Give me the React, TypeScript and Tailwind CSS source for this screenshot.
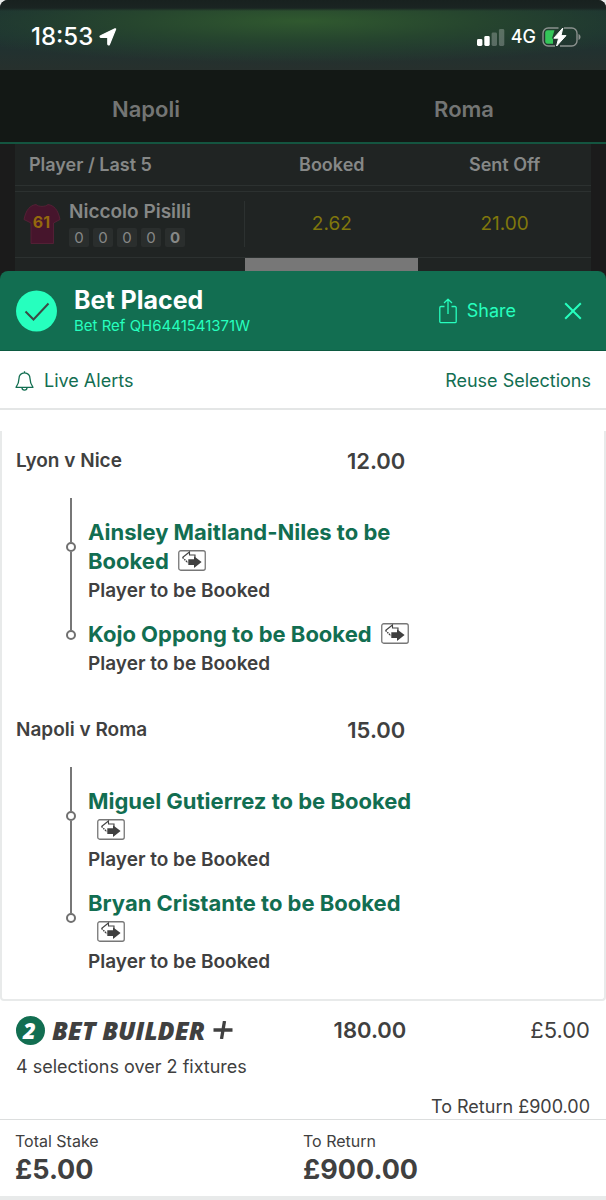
import type { ReactNode } from "react";

type Selection = { name: string; market: string };
type Fixture = { title: string; odds: string; selections: Selection[] };

const fixtures: Fixture[] = [
  {
    title: "Lyon v Nice",
    odds: "12.00",
    selections: [
      { name: "Ainsley Maitland-Niles to be Booked", market: "Player to be Booked" },
      { name: "Kojo Oppong to be Booked", market: "Player to be Booked" },
    ],
  },
  {
    title: "Napoli v Roma",
    odds: "15.00",
    selections: [
      { name: "Miguel Gutierrez to be Booked", market: "Player to be Booked" },
      { name: "Bryan Cristante to be Booked", market: "Player to be Booked" },
    ],
  },
];

function StatusBar() {
  return (
    <div className="flex h-[70px] items-center justify-between rounded-t-lg bg-[linear-gradient(to_bottom,#18211f_0px,#1a2422_8px,transparent_11px),radial-gradient(ellipse_65%_60%_at_50%_30%,#30592f_0%,#26452e_45%,transparent_100%),linear-gradient(to_bottom,#1b2f32_0%,#1d3232_50%,#27302d_100%)] pr-[25px] pl-[31px] pt-1 text-white">
      <div className="flex items-center gap-[6px]">
        <span className="text-[24px] leading-7 font-medium">18:53</span>
        <svg width="18" height="18" viewBox="0 0 18 18" aria-hidden="true">
          <path d="M16.6 1.3 10.4 16.4c-.4.9-1.6.7-1.6-.3V9.4H1.9c-1 0-1.2-1.2-.3-1.6L16 .8c.5-.2.8.1.6.5Z" fill="#fff" stroke="#fff" strokeWidth="1.2" strokeLinejoin="round" />
        </svg>
      </div>
      <div className="flex items-center gap-[6px]">
        <svg width="28" height="18" viewBox="0 0 28 18" aria-hidden="true">
          <rect x="0" y="11" width="5.4" height="7" rx="1.4" fill="#fff" />
          <rect x="7.3" y="8" width="5.4" height="10" rx="1.4" fill="#fff" />
          <rect x="14.6" y="4.5" width="5.4" height="13.5" rx="1.4" fill="#fff" opacity="0.25" />
          <rect x="21.9" y="1" width="5.4" height="17" rx="1.4" fill="#fff" opacity="0.25" />
        </svg>
        <span className="text-[18px] leading-6 font-medium">4G</span>
        <svg width="39" height="20" viewBox="0 0 39 20" aria-hidden="true">
          <path d="M16.5 1H6.2A5.2 5.2 0 0 0 1 6.2v7.6A5.2 5.2 0 0 0 6.2 19H13M22 1h7.8A5.2 5.2 0 0 1 35 6.2v7.6a5.2 5.2 0 0 1-5.2 5.2H18" fill="none" stroke="#8b918e" strokeWidth="1.4" />
          <path d="M5.5 3.3H12.5L10 11.5H11V16.7H5.5A2.3 2.3 0 0 1 3.2 14.4V5.6A2.3 2.3 0 0 1 5.5 3.3Z" fill="#34c759" />
          <path d="M20.8 1 11.8 11.2h4.8L14.6 19 24 8.6h-5Z" fill="#fff" stroke="#fff" strokeWidth="1" strokeLinejoin="round" />
          <path d="M36.5 7v6c1.3-.5 2-1.7 2-3s-.7-2.5-2-3Z" fill="#8b918e" />
        </svg>
      </div>
    </div>
  );
}

function Shirt() {
  return (
    <svg width="38" height="42" viewBox="0 0 38 42" className="font-['Inter',sans-serif]" role="img" aria-label="61">
      <path d="M13 1.5C15.5 4 22.5 4 25 1.5C31 2.5 35 6.5 37 16.5L30.5 20V40.5H8V20L1 16.5C3 6.5 7 2.5 13 1.5Z" fill="#46152c" stroke="#5b2238" strokeWidth="0.8" />
      <text x="18.5" y="25" textAnchor="middle" fontSize="16" fontWeight="700" fill="#94680d">61</text>
    </svg>
  );
}

function PlayerTable() {
  return (
    <div className="h-[127px] overflow-hidden bg-[#1b1b1b] px-[15px]">
      <table className="w-full table-fixed border-collapse bg-[#202423] text-[#868887]">
        <colgroup>
          <col className="w-2/5" />
          <col className="w-[30%]" />
          <col className="w-[30%]" />
        </colgroup>
        <thead>
          <tr className="h-[41px] border-b border-[#2c3130] text-[18px]">
            <th className="p-0 pl-[14px] text-left font-semibold">Player / Last 5</th>
            <th className="p-0 font-semibold">Booked</th>
            <th className="p-0 font-semibold">Sent Off</th>
          </tr>
        </thead>
        <tbody>
          <tr className="h-[6px] border-b border-[#2c3130]">
            <td colSpan={3} className="p-0" />
          </tr>
          <tr className="h-[66px] border-b border-[#2c3130] text-[19px] text-[#80770c]">
            <td className="p-0">
              <div className="flex items-center gap-2 border-r border-[#2c3130] pl-2">
                <Shirt />
                <div className="flex flex-col gap-[5px] text-[#868887]">
                  <span className="text-[19px] leading-[22px] font-semibold">Niccolo Pisilli</span>
                  <span className="flex gap-1 text-[15px] leading-[19px]">
                    <span className="w-5 rounded-xs bg-[#2a2e2d] text-center">0</span>
                    <span className="w-5 rounded-xs bg-[#2a2e2d] text-center">0</span>
                    <span className="w-5 rounded-xs bg-[#2a2e2d] text-center">0</span>
                    <span className="w-5 rounded-xs bg-[#2a2e2d] text-center">0</span>
                    <span className="w-5 rounded-xs bg-[#2a2e2d] text-center font-bold">0</span>
                  </span>
                </div>
              </div>
            </td>
            <td className="p-0 text-center">2.62</td>
            <td className="p-0 text-center">21.00</td>
          </tr>
          <tr className="h-6">
            <td />
            <td className="bg-[#777777]" />
            <td />
          </tr>
        </tbody>
      </table>
    </div>
  );
}

function SwapBadge() {
  return (
    <svg width="28" height="21" viewBox="0 0 28 21" className="ml-[9px] inline-block align-[-2px]" role="img" aria-label="Substitution cover">
      <rect x="0.75" y="0.75" width="26.5" height="19.5" rx="2" fill="#fff" stroke="#777" strokeWidth="1.3" />
      <path d="M17 8.5V5H11.5V2L4.5 7.5" fill="none" stroke="#444" strokeWidth="1.1" />
      <path d="M4.5 7.5 10 12.8" fill="none" stroke="#444" strokeWidth="1.4" strokeDasharray="1.6 0.8" />
      <path d="M10.3 9.3H16V6.3L23.6 12 16 18V15H10.3Z" fill="#404040" />
    </svg>
  );
}

function Rail({ children }: { children?: ReactNode }) {
  return (
    <div className="flex flex-col items-center" aria-hidden="true">
      {children}
    </div>
  );
}

function SelectionItem({ selection, first, last }: { selection: Selection; first: boolean; last: boolean }) {
  return (
    <li className="grid grid-cols-[12px_1fr] gap-x-[11px]">
      <Rail>
        <div className={first ? "h-5 w-[2px] bg-[#777]" : "h-[15px] w-[2px] bg-[#777]"} />
      </Rail>
      <div />
      <Rail>
        <div className="w-[2px] flex-1 bg-[#777]" />
        <div className="size-[10px] rounded-full border-2 border-[#707070] bg-white" />
        <div className={last ? "w-[2px] flex-1" : "w-[2px] flex-1 bg-[#777]"} />
      </Rail>
      <div className="text-[22px] leading-[29px] font-bold text-[#126e51]">
        {selection.name}
        <SwapBadge />
      </div>
      <Rail>
        <div className={last ? "w-[2px] flex-1" : "w-[2px] flex-1 bg-[#777]"} />
      </Rail>
      <div className="text-[19px] leading-[29px] font-semibold">{selection.market}</div>
    </li>
  );
}

function FixtureBlock({ fixture }: { fixture: Fixture }) {
  return (
    <section>
      <div className="flex w-[67%] items-center justify-between pl-[14px] leading-[30px] font-semibold">
        <h2 className="text-[19px]">{fixture.title}</h2>
        <span className="text-[22px]">{fixture.odds}</span>
      </div>
      <ul className="mt-[22px] w-[70%] pl-[63px]">
        {fixture.selections.map((s, i) => (
          <SelectionItem key={s.name} selection={s} first={i === 0} last={i === fixture.selections.length - 1} />
        ))}
      </ul>
    </section>
  );
}

function SheetHeader() {
  return (
    <header className="flex h-20 items-center rounded-t-lg border-b border-[#0c5a41] bg-[#126e51] pr-6 pl-4">
      <svg width="41" height="42" viewBox="0 0 41 42" className="shrink-0" aria-hidden="true">
        <circle cx="20.5" cy="21" r="20.5" fill="#26ffbe" />
        <path d="M9.5 21.5 17.5 29.5 32.5 13.5" fill="none" stroke="#3b4a45" strokeWidth="2" />
      </svg>
      <div className="ml-[17px] flex flex-1 flex-col pt-[2px]">
        <h1 className="text-[25px] leading-7 font-bold text-white">Bet Placed</h1>
        <p className="text-[15px] leading-6 text-[#26ffbe]">Bet Ref QH6441541371W</p>
      </div>
      <button type="button" className="flex items-center gap-[10px] text-[18px] text-[#26ffbe]">
        <svg width="18" height="26" viewBox="0 0 18 26" fill="none" stroke="currentColor" strokeWidth="1.3" strokeLinejoin="round" aria-hidden="true">
          <path d="M5.5 8.5H2A1.2 1.2 0 0 0 .8 9.7V23.5A1.2 1.2 0 0 0 2 24.7H16A1.2 1.2 0 0 0 17.2 23.5V9.7A1.2 1.2 0 0 0 16 8.5H12.5M9 16V1.2M5 5 9 1.2 13 5" />
        </svg>
        Share
      </button>
      <button type="button" aria-label="Close" className="ml-12 text-[#26ffbe]">
        <svg width="18" height="18" viewBox="0 0 18 18" fill="none" stroke="currentColor" strokeWidth="2" aria-hidden="true">
          <path d="M1.2 1.2 16.8 16.8M16.8 1.2 1.2 16.8" />
        </svg>
      </button>
    </header>
  );
}

export default function App() {
  return (
    <div className="min-h-screen bg-[#e8eaea] font-['Inter',sans-serif] text-[#404040]">
      <div className="rounded-t-lg bg-[#1b1b1b]">
        <StatusBar />
        <div className="flex h-[74px] items-center justify-between border-b-2 border-[#145540] bg-[#131815] px-[112px] pt-[6px] text-[22px] font-semibold text-[#737574]">
          <span>Napoli</span>
          <span>Roma</span>
        </div>
        <PlayerTable />
        <SheetHeader />
      </div>

      <main className="bg-white">
        <div className="flex h-[59px] items-center justify-between border-b-2 border-[#e4e6e6] px-[15px] pt-[2px] text-[18px] text-[#126e51]">
          <button type="button" className="flex items-center gap-[10px]">
            <svg width="19" height="20" viewBox="0 0 19 20" fill="none" stroke="currentColor" strokeWidth="1.3" strokeLinejoin="round" aria-hidden="true">
              <path d="M9.5 1.8C6 1.8 4 4.5 4 7.5C4 12 3.2 13.3 1 16.3H18C15.8 13.3 15 12 15 7.5C15 4.5 13 1.8 9.5 1.8ZM9.5 1.8V.3M7 16.8C7 18.3 8 19.2 9.5 19.2S12 18.3 12 16.8" />
            </svg>
            Live Alerts
          </button>
          <button type="button">Reuse Selections</button>
        </div>

        <div className="pt-[21px]">
          <div className="flex flex-col gap-[37px] rounded-b border-x-2 border-b-2 border-[#e8eaea] pt-[15px] pb-[23px]">
            {fixtures.map((f) => (
              <FixtureBlock key={f.title} fixture={f} />
            ))}
          </div>
        </div>

        <section className="border-b border-[#dcdede] px-4 pt-[11px]">
          <div className="flex items-center">
            <div className="flex w-[68%] items-center justify-between">
              <div className="flex items-center gap-[7px] font-['Open_Sans',sans-serif] leading-9 font-extrabold italic">
                <span className="flex size-[29px] items-center justify-center rounded-full bg-[#126e51] pr-[2px] text-[22px] leading-none text-white">2</span>
                <span className="flex items-center gap-2 text-[25px]">
                  BET BUILDER
                  <svg width="20" height="18" viewBox="0 0 20 18" role="img" aria-label="plus">
                    <path d="M11.5 0 8.5 18M.5 9H19.5" stroke="#404040" strokeWidth="3.3" />
                  </svg>
                </span>
              </div>
              <span className="text-[22px] font-semibold">180.00</span>
            </div>
            <span className="flex-1 text-right text-[22px]">£5.00</span>
          </div>
          <p className="mt-[7px] text-[18px] leading-6">4 selections over 2 fixtures</p>
          <p className="mt-4 text-right text-[18px] leading-6">To Return £900.00</p>
        </section>

        <section className="grid h-[76px] grid-cols-2 px-[15px] pt-[9px]">
          <div>
            <p className="text-[16px] leading-6">Total Stake</p>
            <p className="text-[27px] leading-[34px] font-bold">£5.00</p>
          </div>
          <div>
            <p className="text-[16px] leading-6">To Return</p>
            <p className="text-[27px] leading-[34px] font-bold">£900.00</p>
          </div>
        </section>
      </main>
    </div>
  );
}
